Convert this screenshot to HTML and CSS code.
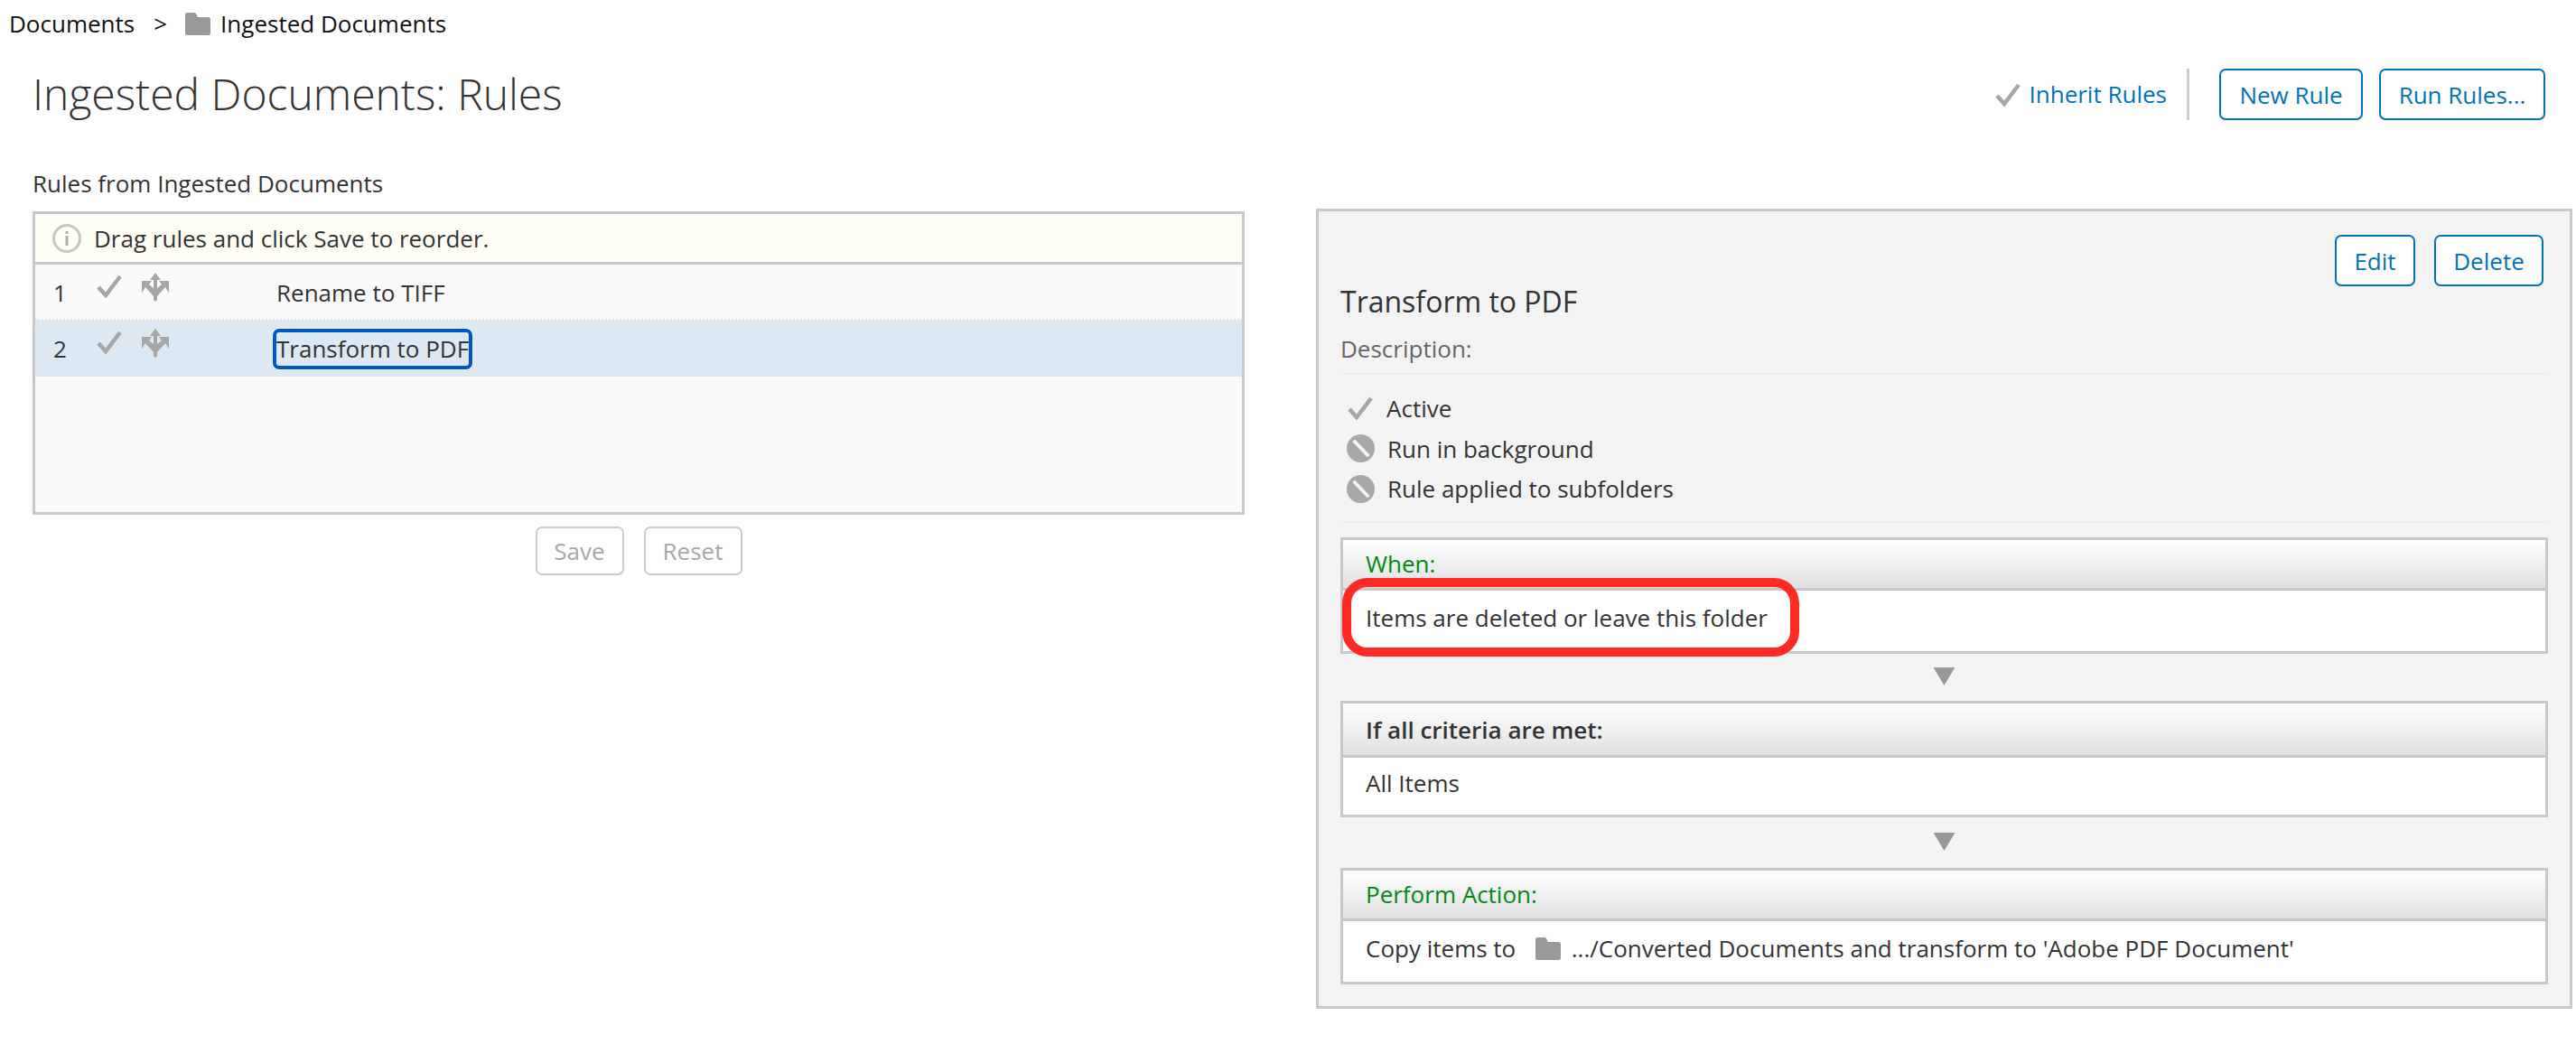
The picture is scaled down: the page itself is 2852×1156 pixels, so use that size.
FILE: index.html
```html
<!DOCTYPE html>
<html lang="en">
<head>
    <meta charset="UTF-8">
    <meta name="viewport" content="width=device-width, initial-scale=1.0">
    <title>Ingested Documents: Rules</title>
    <link rel="stylesheet" href="styles.css">
</head>
<body>
    <!-- Breadcrumb -->
    <div class="breadcrumb">
        <span>Documents</span>
        <span class="crumb-sep">&gt;</span>
        <svg class="folder" viewBox="0 0 28 25"><path d="M0 2.500 Q0 0 2.500 0 H10 Q12 0 13 3 L13.500 5 H25.500 Q28 5 28 7.500 V22.500 Q28 25 25.500 25 H2.500 Q0 25 0 22.500 Z"/></svg>
        <span>Ingested Documents</span>
    </div>

    <!-- Title bar -->
    <div class="page-head">
        <h1>Ingested Documents: Rules</h1>
        <div class="actions">
            <svg class="check check-head" viewBox="0 0 28 26"><path d="M2 14 L10 23 L26 2"/></svg>
            <a class="link">Inherit Rules</a>
            <span class="divider"></span>
            <button class="btn btn-new">New Rule</button>
            <button class="btn btn-run">Run Rules...</button>
        </div>
    </div>

    <div class="columns">
        <!-- Rule list -->
        <div class="left">
            <div class="list-label">Rules from Ingested Documents</div>
            <div class="rule-box">
                <div class="hint">
                    <svg class="info" viewBox="0 0 32 32">
                        <circle cx="16" cy="16" r="14.500"/>
                        <rect x="14.500" y="13" width="3" height="11"/>
                        <rect x="14.500" y="8" width="3" height="3"/>
                    </svg>
                    <span>Drag rules and click Save to reorder.</span>
                </div>
                <div class="rule-row">
                    <span class="rule-num">1</span>
                    <svg class="check check-row" viewBox="0 0 28 26"><path d="M2 14 L10 23 L26 2"/></svg>
                    <svg class="move" viewBox="0 0 30 32"><path d="M15 0 L21 8 H17 V17 L22 13 L19 9 H30 V22 L26 16 L17 26 V30 L15 32 L13 30 V26 L4 16 L0 22 V9 H11 L8 13 L13 17 V8 H9 Z"/></svg>
                    <span class="rule-name">Rename to TIFF</span>
                </div>
                <div class="rule-row selected">
                    <span class="rule-num">2</span>
                    <svg class="check check-row" viewBox="0 0 28 26"><path d="M2 14 L10 23 L26 2"/></svg>
                    <svg class="move" viewBox="0 0 30 32"><path d="M15 0 L21 8 H17 V17 L22 13 L19 9 H30 V22 L26 16 L17 26 V30 L15 32 L13 30 V26 L4 16 L0 22 V9 H11 L8 13 L13 17 V8 H9 Z"/></svg>
                    <span class="rule-name focused">Transform to PDF</span>
                </div>
            </div>
            <div class="list-buttons">
                <button class="btn btn-off btn-save">Save</button>
                <button class="btn btn-off btn-reset">Reset</button>
            </div>
        </div>

        <!-- Rule details -->
        <div class="panel">
            <div class="panel-buttons">
                <button class="btn btn-edit">Edit</button>
                <button class="btn btn-delete">Delete</button>
            </div>
            <h2>Transform to PDF</h2>
            <div class="description">Description:</div>
            <ul class="flags">
                <li>
                    <svg class="check check-flag" viewBox="0 0 28 26"><path d="M2 14 L10 23 L26 2"/></svg>
                    Active
                </li>
                <li>
                    <svg class="ban" viewBox="0 0 32 32"><circle cx="16" cy="16" r="16"/><path d="M8 7 L25 25"/></svg>
                    Run in background
                </li>
                <li>
                    <svg class="ban" viewBox="0 0 32 32"><circle cx="16" cy="16" r="16"/><path d="M8 7 L25 25"/></svg>
                    Rule applied to subfolders
                </li>
            </ul>

            <div class="block block-when">
                <div class="block-head green">When:</div>
                <div class="block-body">Items are deleted or leave this folder</div>
                <div class="callout"></div>
            </div>
            <div class="arrow"></div>
            <div class="block block-if">
                <div class="block-head strong">If all criteria are met:</div>
                <div class="block-body">All Items</div>
            </div>
            <div class="arrow arrow-last"></div>
            <div class="block">
                <div class="block-head green">Perform Action:</div>
                <div class="block-body">
                    Copy items to
                    <svg class="folder folder-copy" viewBox="0 0 28 25"><path d="M0 2.500 Q0 0 2.500 0 H10 Q12 0 13 3 L13.500 5 H25.500 Q28 5 28 7.500 V22.500 Q28 25 25.500 25 H2.500 Q0 25 0 22.500 Z"/></svg>
                    .../Converted Documents and transform to 'Adobe PDF Document'
                </div>
            </div>
        </div>
    </div>
</body>
</html>
```

FILE: styles.css
```css
* {
    box-sizing: border-box;
}
body {
    margin: 0;
    font-family: "Open Sans", "Liberation Sans", sans-serif;
    font-size: 26px;
    color: #333;
    background-color: #fff;
}
.breadcrumb {
    display: flex;
    align-items: center;
    height: 52px;
    margin-bottom: 2px;
    padding-left: 10px;
    color: #111;
}
.crumb-sep {
    margin: 0 20px 0 21px;
}
.folder {
    width: 28px;
    height: 25px;
    margin-right: 11px;
    fill: #999;
}
.page-head {
    display: flex;
    justify-content: space-between;
    height: 132px;
    padding: 22px 34px 0 36px;
}
h1 {
    margin: 0;
    font-size: 48px;
    font-weight: 300;
    line-height: 56px;
}
.actions {
    display: flex;
    align-items: center;
    height: 57px;
}
.link {
    margin-bottom: 2px;
    color: #0072bc;
}
.divider {
    width: 3px;
    height: 57px;
    margin: 0 33px 0 22px;
    background-color: #ccc;
}
.btn {
    height: 57px;
    padding: 0;
    border: 2px solid #0072b9;
    border-radius: 7px;
    background-color: #fff;
    color: #0072b9;
    font-family: inherit;
    font-size: 26px;
}
.btn-new {
    width: 159px;
    margin-right: 18px;
}
.btn-run {
    width: 184px;
}
.check {
    fill: none;
    stroke: #a6a6a6;
    stroke-width: 4.500;
}
.check-head {
    width: 28px;
    height: 26px;
    margin-right: 9px;
}
.columns {
    display: grid;
    grid-template-columns: 1342px 1391px;
    gap: 79px;
    padding-left: 36px;
}
.list-label {
    height: 48px;
    line-height: 35px;
}
.rule-box {
    height: 336px;
    border: 3px solid #c8c8c8;
    background-color: #fafafa;
}
.hint {
    display: flex;
    align-items: center;
    height: 56px;
    padding-left: 19px;
    border-bottom: 3px solid #c8c8c8;
    background-color: #fffff6;
}
.info {
    width: 32px;
    height: 32px;
    margin-right: 14px;
}
.info circle {
    fill: none;
    stroke: #c6c6c6;
    stroke-width: 3;
}
.info rect {
    fill: #b0b0b0;
}
.rule-row {
    display: flex;
    align-items: center;
    height: 62px;
    padding-top: 2px;
    border-bottom: 2px dotted #e4e4e4;
}
.rule-row.selected {
    background-color: #dce9f3;
}
.rule-num {
    width: 68px;
    padding-left: 20px;
}
.check-row {
    width: 28px;
    height: 26px;
    margin: -14px 22px 0 0;
}
.move {
    width: 30px;
    height: 32px;
    margin: -12px 116px 0 0;
    fill: #a6a6a6;
}
.rule-name {
    padding: 0 3px;
    line-height: 43px;
}
.rule-name.focused {
    border-radius: 6px;
    outline: 4px solid #0058c6;
    outline-offset: -3px;
    box-shadow: 0 0 0 2px #fff;
}
.list-buttons {
    display: flex;
    justify-content: center;
    gap: 22px;
    margin-top: 13px;
}
.btn-off {
    height: 54px;
    border-color: #ccc;
    color: #a8a8a8;
}
.btn-save {
    width: 98px;
}
.btn-reset {
    width: 109px;
}
.panel {
    height: 886px;
    margin-top: 45px;
    padding: 26px 24px 0 24px;
    border: 3px solid #c8c8c8;
    background-color: #f3f3f3;
}
.panel-buttons {
    display: flex;
    justify-content: flex-end;
    gap: 21px;
    padding-right: 5px;
}
.btn-edit {
    width: 89px;
}
.btn-delete {
    width: 121px;
}
h2 {
    margin: 0;
    font-size: 32px;
    font-weight: 400;
    line-height: 34px;
}
.description {
    height: 47px;
    margin-top: 17px;
    border-bottom: 2px solid #ececec;
    color: #666;
    line-height: 36px;
}
.flags {
    height: 164px;
    margin: 0 0 16px;
    padding: 15px 0 0;
    border-bottom: 2px solid #ececec;
    list-style: none;
}
.flags li {
    display: flex;
    align-items: center;
    height: 44.500px;
}
.check-flag {
    width: 28px;
    height: 26px;
    margin: 0 15px 0 8px;
}
.ban {
    width: 31px;
    height: 31px;
    margin: 0 14px 0 7px;
    fill: #a8a8a8;
    stroke: #f3f3f3;
    stroke-width: 4;
}
.ban circle {
    stroke: none;
}
.block {
    position: relative;
    height: 129px;
    border: 3px solid #c8c8c8;
    background-color: #fff;
}
.block-head {
    height: 56px;
    padding-left: 25px;
    border-bottom: 3px solid #c8c8c8;
    background: linear-gradient(#fff, #e0e0e0);
    line-height: 52px;
}
.block-if .block-head {
    height: 60px;
    line-height: 58px;
}
.block-body {
    padding-left: 25px;
    line-height: 60px;
}
.block-if .block-body {
    line-height: 56px;
}
.green {
    color: #008a14;
}
.strong {
    font-weight: 600;
}
.arrow {
    width: 24px;
    height: 20px;
    margin: 15px auto 17px;
    background-color: #999;
    clip-path: polygon(0 0, 100% 0, 50% 100%);
}
.arrow-last {
    margin: 17px auto 19px;
}
.folder-copy {
    margin: 0 5px 0 15px;
    vertical-align: -3px;
}
.callout {
    position: absolute;
    left: -1px;
    top: 42px;
    width: 506px;
    height: 87px;
    border: 10px solid #ff2a24;
    border-radius: 28px;
}
```
